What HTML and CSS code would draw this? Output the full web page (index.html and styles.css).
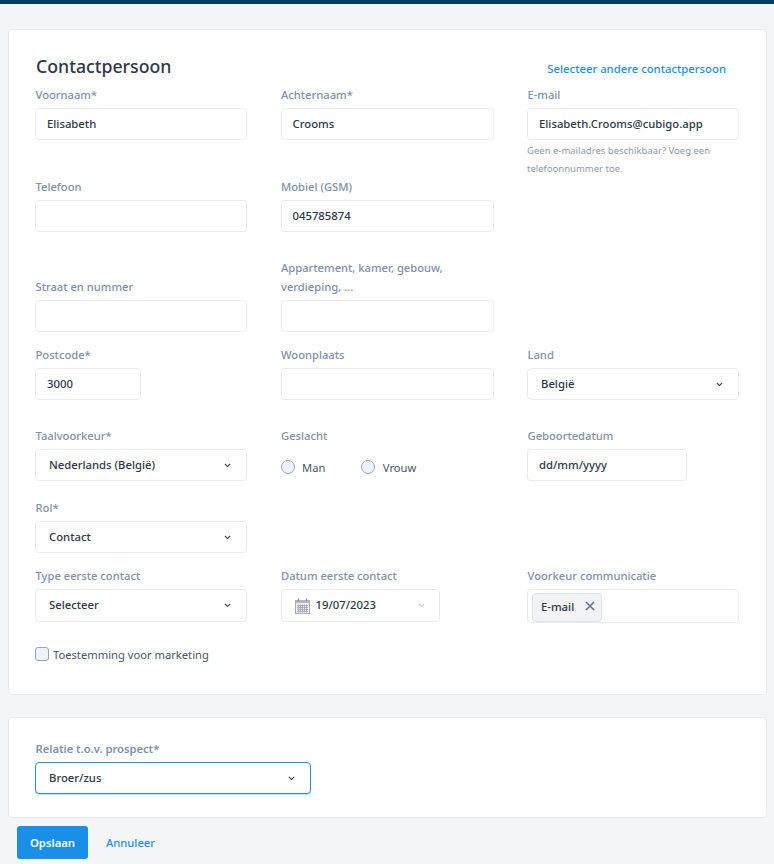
FILE: index.html
```html
<!DOCTYPE html>
<html lang="nl">
<head>
<meta charset="utf-8">
<title>Contactpersoon</title>
<link rel="stylesheet" href="styles.css">
</head>
<body>
<div class="topbar"></div>
<main class="page">
  <section class="card card-main">
    <header class="card-head">
      <h1 class="title">Contactpersoon</h1>
      <a class="link link-select">Selecteer andere contactpersoon</a>
    </header>
    <div class="form-grid">
      <div class="field"><label>Voornaam*</label><div class="control">Elisabeth</div></div>
      <div class="field"><label>Achternaam*</label><div class="control">Crooms</div></div>
      <div class="field"><label>E-mail</label><div class="control">Elisabeth.Crooms@cubigo.app</div>
        <p class="hint">Geen e-mailadres beschikbaar? Voeg een telefoonnummer toe.</p></div>

      <div class="field"><label>Telefoon</label><div class="control control-mid"></div></div>
      <div class="field"><label>Mobiel (GSM)</label><div class="control control-mid">045785874</div></div>
      <div class="field"></div>

      <div class="field field-end"><label>Straat en nummer</label><div class="control"></div></div>
      <div class="field field-end"><label>Appartement, kamer, gebouw, verdieping, ...</label><div class="control"></div></div>
      <div class="field"></div>

      <div class="field"><label>Postcode*</label><div class="control control-zip">3000</div></div>
      <div class="field"><label>Woonplaats</label><div class="control"></div></div>
      <div class="field"><label>Land</label><div class="control control-select">België<svg class="chev" viewBox="0 0 8 5"><path d="M1 1l3 3 3-3"/></svg></div></div>

      <div class="field"><label>Taalvoorkeur*</label><div class="control control-select">Nederlands (België)<svg class="chev" viewBox="0 0 8 5"><path d="M1 1l3 3 3-3"/></svg></div></div>
      <div class="field"><label>Geslacht</label>
        <div class="radios">
          <span class="radio-item"><span class="radio"></span>Man</span>
          <span class="radio-item"><span class="radio"></span>Vrouw</span>
        </div></div>
      <div class="field"><label>Geboortedatum</label><div class="control control-date">dd/mm/yyyy</div></div>

      <div class="field"><label>Rol*</label><div class="control control-select">Contact<svg class="chev" viewBox="0 0 8 5"><path d="M1 1l3 3 3-3"/></svg></div></div>
      <div class="field"></div>
      <div class="field"></div>

      <div class="field"><label>Type eerste contact</label><div class="control control-tall control-select">Selecteer<svg class="chev" viewBox="0 0 8 5"><path d="M1 1l3 3 3-3"/></svg></div></div>
      <div class="field"><label>Datum eerste contact</label>
        <div class="control control-tall control-picker">
          <svg class="cal" viewBox="0 0 15 16"><rect x="0.5" y="2.5" width="14" height="13" fill="#eceef0" stroke="#a9adb3"/><rect x="0.5" y="2.5" width="14" height="2.5" fill="#b4b7bc"/><path d="M3.5 0.5v3M11.5 0.5v3" stroke="#8d9198" stroke-width="1.2"/><path d="M2 7.5h11M2 9.5h11M2 11.5h11M2 13.5h11M3.5 6.5v8M5.5 6.5v8M7.5 6.5v8M9.5 6.5v8M11.5 6.5v8" stroke="#9ea2a9" stroke-width="0.8"/></svg>
          <span class="picker-text">19/07/2023</span>
          <svg class="chev chev-muted" viewBox="0 0 8 5"><path d="M1 1l3 3 3-3"/></svg>
        </div></div>
      <div class="field"><label>Voorkeur communicatie</label>
        <div class="control control-tags"><span class="tag">E-mail<svg class="tag-x" viewBox="0 0 10 10"><path d="M1 1l8 8M9 1l-8 8"/></svg></span></div></div>
    </div>
    <div class="consent"><span class="checkbox"></span>Toestemming voor marketing</div>
  </section>

  <section class="card card-relation">
    <div class="field field-relation"><label class="label-strong">Relatie t.o.v. prospect*</label>
      <div class="control control-select control-focus">Broer/zus<svg class="chev" viewBox="0 0 8 5"><path d="M1 1l3 3 3-3"/></svg></div></div>
  </section>

  <footer class="actions">
    <button class="btn-primary" type="button">Opslaan</button>
    <a class="link link-cancel">Annuleer</a>
  </footer>
</main>
</body>
</html>
```
FILE: styles.css
```css
* { box-sizing: border-box; }
html, body { margin: 0; height: 100%; }
body {
  background: #f4f5f7;
  font-family: "Noto Sans", "Open Sans", sans-serif;
  font-size: 11.2px;
  color: #2d3748;
  overflow: hidden;
}
.topbar { height: 4px; background: #003f62; }
.page { padding: 25px 7px 0 8px; }
.card {
  background: #fff;
  border: 1px solid #e8eaee;
  border-radius: 4px;
  padding: 0 26px;
}
.card-main { height: 666px; padding-top: 21px; }
.card-head { display: flex; justify-content: space-between; align-items: flex-start; height: 34px; }
.title { margin: 0; font-size: 17.7px; font-weight: 500; color: #2d3748; line-height: 30px; padding-left: 1px; }
.link { color: #1e90ea; font-weight: 500; }
.link-select { margin: 10px 14px 0 0; font-size: 11.3px; line-height: 16px; }
.form-grid {
  display: grid;
  grid-template-columns: 212px 213px 212px;
  column-gap: 33.5px;
  grid-template-rows: 91.5px 81.5px 87px 81px 72px 68px 69px;
}
.field { display: flex; flex-direction: column; }
.field-end { justify-content: flex-end; height: 74px; }
label { display: block; color: #8190a9; font-size: 11.2px; line-height: 19.5px; margin-bottom: 3.5px; font-weight: 500; padding-left: 0.5px; }
.label-strong { font-weight: 600; }
.control {
  height: 32px;
  flex: none;
  display: flex;
  align-items: center;
  background: #fff;
  border: 1px solid #e9ebef;
  border-radius: 4px;
  padding: 0 11px 2px;
  font-weight: 500;
  color: #2d3748;
  font-size: 11.3px;
}
.control-mid { height: 32.5px; padding-bottom: 1px; }
.control-tall { height: 33px; }
.control-zip { width: 106px; }
.control-date { width: 160px; }
.control-select { justify-content: space-between; padding: 0 15px 2px 13px; }
.chev { width: 7px; height: 4.5px; fill: none; stroke: #2d3748; stroke-width: 1.2; flex: none; margin-top: 2px; }
.chev-muted { stroke: #c5cad3; margin-left: auto; }
.control-picker { width: 159px; padding: 0 14px 2px 13px; }
.cal { width: 15px; height: 16px; margin-right: 6px; margin-top: 2px; }
.control-tags { padding: 0 4px; height: 34px; }
.tag {
  display: flex; align-items: center; height: 29px; width: 70px;
  padding: 0 5px 2px 8px; gap: 11px;
  background: #f1f3f6; border: 1px solid #dfe2e7; border-radius: 4px;
  margin-top: 2px;
}
.tag-x { width: 10px; height: 10px; fill: none; stroke: #6d7683; stroke-width: 1.7; flex: none; }
.radios { display: flex; gap: 36px; height: 36px; align-items: center; }
.radio-item { display: flex; align-items: center; gap: 7.5px; color: #4a5568; }
.radio { width: 14px; height: 14px; border-radius: 50%; background: #edf2fb; border: 1px solid #9aa3b2; }
.hint { margin: 2px 0 0; font-size: 9.5px; line-height: 18px; color: #8d99ae; }
.consent { display: flex; align-items: center; gap: 4px; color: #4a5568; font-size: 11.2px; height: 20px; margin-top: 9px; }
.checkbox { width: 14px; height: 14px; border-radius: 3px; background: #edf2fb; border: 1px solid #9aa3b2; }
.card-relation { height: 101px; margin-top: 22px; padding-top: 21px; }
.field-relation { width: 276px; }
.control-focus { border-color: #1e90ea; box-shadow: 0 1px 0 #bfe0f8; }
.actions { display: flex; align-items: center; margin-top: 8px; padding-left: 9px; }
.btn-primary {
  width: 71px; height: 33px; border: 0; border-radius: 3px;
  background: #1a8fe8; color: #fff; font: 600 11.3px "Noto Sans", sans-serif;
}
.link-cancel { margin-left: 18px; font-size: 11.2px; }
```
